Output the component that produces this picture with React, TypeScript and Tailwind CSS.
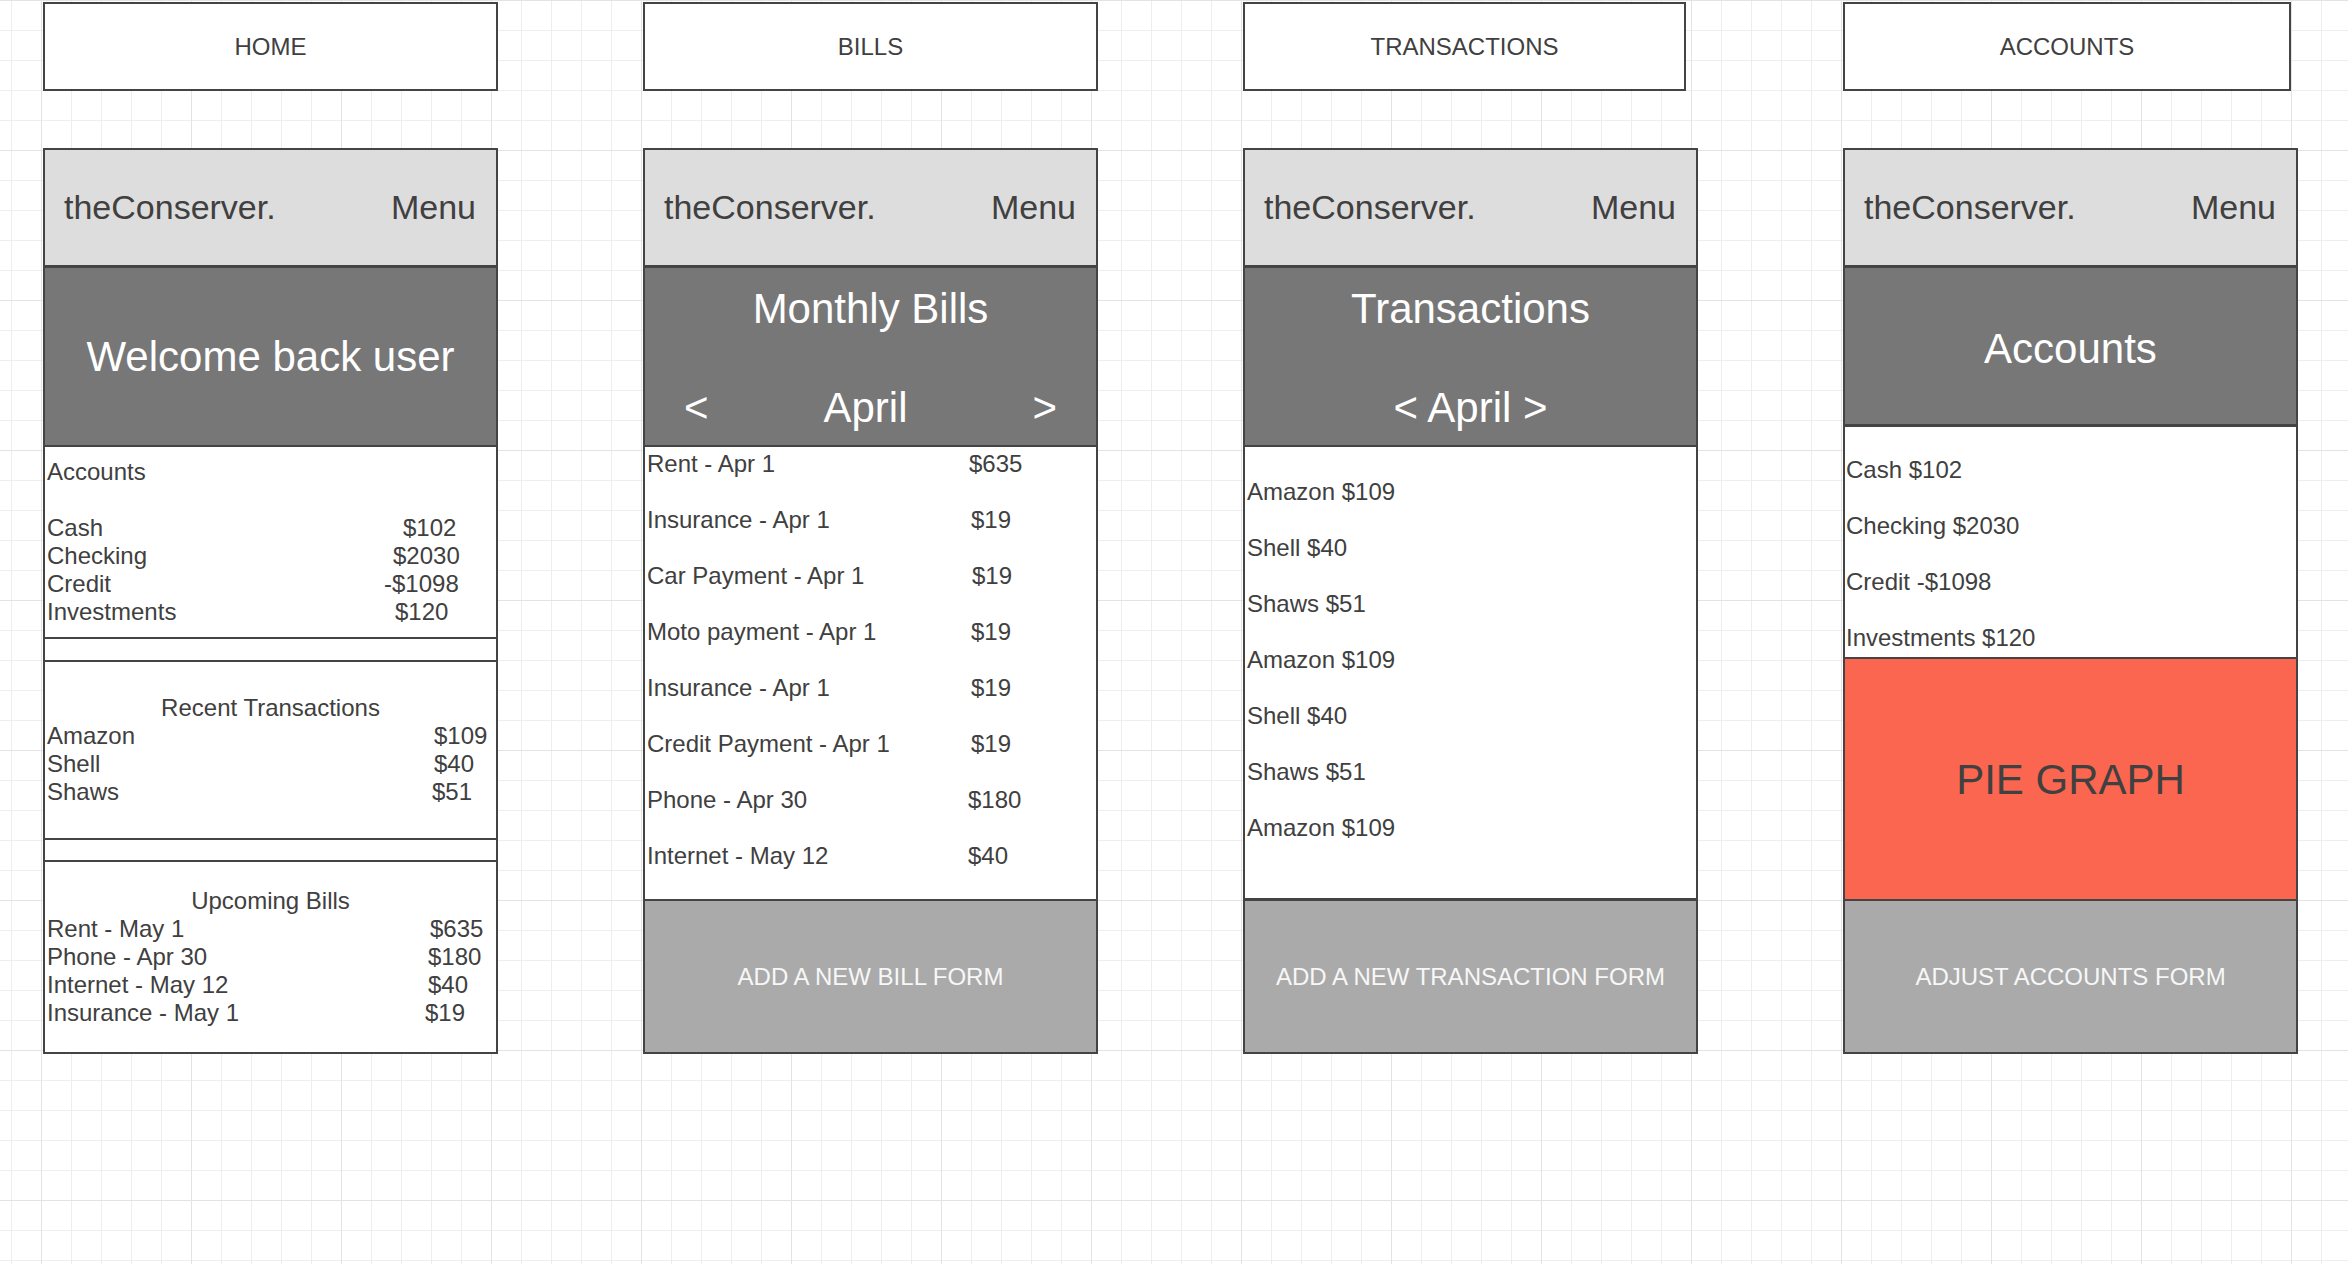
import React from "react";

type Row = { name: string; amount: string; w: string };

const homeAccounts: Row[] = [
  { name: "Cash", amount: "$102", w: "w-[356px]" },
  { name: "Checking", amount: "$2030", w: "w-[346px]" },
  { name: "Credit", amount: "-$1098", w: "w-[337px]" },
  { name: "Investments", amount: "$120", w: "w-[348px]" },
];

const recentTx: Row[] = [
  { name: "Amazon", amount: "$109", w: "w-[387px]" },
  { name: "Shell", amount: "$40", w: "w-[387px]" },
  { name: "Shaws", amount: "$51", w: "w-[385px]" },
];

const upcomingBills: Row[] = [
  { name: "Rent - May 1", amount: "$635", w: "w-[383px]" },
  { name: "Phone - Apr 30", amount: "$180", w: "w-[381px]" },
  { name: "Internet - May 12", amount: "$40", w: "w-[381px]" },
  { name: "Insurance - May 1", amount: "$19", w: "w-[378px]" },
];

const monthlyBills: Row[] = [
  { name: "Rent - Apr 1", amount: "$635", w: "w-[322px]" },
  { name: "Insurance - Apr 1", amount: "$19", w: "w-[324px]" },
  { name: "Car Payment - Apr 1", amount: "$19", w: "w-[325px]" },
  { name: "Moto payment - Apr 1", amount: "$19", w: "w-[324px]" },
  { name: "Insurance - Apr 1", amount: "$19", w: "w-[324px]" },
  { name: "Credit Payment - Apr 1", amount: "$19", w: "w-[324px]" },
  { name: "Phone - Apr 30", amount: "$180", w: "w-[321px]" },
  { name: "Internet - May 12", amount: "$40", w: "w-[321px]" },
];

const transactions = ["Amazon $109", "Shell $40", "Shaws $51", "Amazon $109", "Shell $40", "Shaws $51", "Amazon $109"];

const accountLines = ["Cash $102", "Checking $2030", "Credit -$1098", "Investments $120"];

function Label({ text, w }: { text: string; w: string }) {
  return (
    <div className={`${w} h-[89px] border-2 border-[#444444] bg-white flex items-center justify-center text-[24px] text-[#404040]`}>
      {text}
    </div>
  );
}

function Phone({ children }: { children: React.ReactNode }) {
  return (
    <div className="w-[455px] h-[906px] mt-[57px] border-2 border-[#444444] bg-white flex flex-col overflow-hidden">
      <div className="h-[118px] shrink-0 flex items-center justify-between pl-[19px] pr-[20px] bg-[#dddddd] border-b-[3px] border-[#444444] text-[34px] text-[#404040]">
        <span>theConserver.</span>
        <span>Menu</span>
      </div>
      {children}
    </div>
  );
}

function Rows({ rows }: { rows: Row[] }) {
  return (
    <>
      {rows.map((r, i) => (
        <div key={i} className="flex">
          <span className={r.w}>{r.name}</span>
          <span>{r.amount}</span>
        </div>
      ))}
    </>
  );
}

function FormBar({ text }: { text: string }) {
  return (
    <div className="flex-1 bg-[#aaaaaa] flex items-center justify-center text-[24px] text-[#f7f7f7]">
      {text}
    </div>
  );
}

function MonthTitle({ title, children }: { title: string; children: React.ReactNode }) {
  return (
    <div className="h-[179px] shrink-0 bg-[#777777] border-b-2 border-[#444444] text-white text-[42px] leading-[48px] pt-[17px] flex flex-col">
      <div className="text-center">{title}</div>
      <div className="mt-[51px]">{children}</div>
    </div>
  );
}

export default function App() {
  return (
    <div
      className="w-full min-h-[1264px] h-[1264px] overflow-hidden bg-white font-['Liberation_Sans',Arial,sans-serif] text-[#404040] bg-[linear-gradient(to_right,#e3e3e3_1px,transparent_1px),linear-gradient(to_bottom,#e3e3e3_1px,transparent_1px),linear-gradient(to_right,#eeeeee_1px,transparent_1px),linear-gradient(to_bottom,#eeeeee_1px,transparent_1px)] bg-[size:150px_150px,150px_150px,30px_30px,30px_30px] bg-[position:41px_0,41px_0,11px_0,11px_0]"
    >
      <div className="flex gap-[145px] pl-[43px] pt-[2px]">
        {/* HOME */}
        <div className="flex flex-col">
          <Label text="HOME" w="w-[455px]" />
          <Phone>
            <div className="h-[179px] shrink-0 bg-[#777777] border-b-2 border-[#444444] flex items-center justify-center text-white text-[42px]">
              Welcome back user
            </div>
            <div className="h-[192px] shrink-0 border-b-2 border-[#444444] flex flex-col justify-center pl-[2px] text-[24px] leading-[28px]">
              <div>Accounts</div>
              <div className="h-[28px]" />
              <Rows rows={homeAccounts} />
            </div>
            <div className="h-[23px] shrink-0 border-b-2 border-[#444444]" />
            <div className="h-[178px] shrink-0 border-b-2 border-[#444444] flex flex-col justify-center pl-[2px] text-[24px] leading-[28px]">
              <div className="text-center pr-[2px]">Recent Transactions</div>
              <Rows rows={recentTx} />
            </div>
            <div className="h-[22px] shrink-0 border-b-2 border-[#444444]" />
            <div className="flex-1 flex flex-col justify-center pl-[2px] text-[24px] leading-[28px]">
              <div className="text-center pr-[2px]">Upcoming Bills</div>
              <Rows rows={upcomingBills} />
            </div>
          </Phone>
        </div>

        {/* BILLS */}
        <div className="flex flex-col">
          <Label text="BILLS" w="w-[455px]" />
          <Phone>
            <MonthTitle title="Monthly Bills">
              <div className="flex items-center justify-between px-[39px]">
                <span>&lt;</span>
                <span className="mr-[10px]">April</span>
                <span>&gt;</span>
              </div>
            </MonthTitle>
            <div className="h-[454px] shrink-0 border-b-2 border-[#444444] pt-[3px] pl-[2px] text-[24px] leading-[28px] flex flex-col gap-[28px]">
              <Rows rows={monthlyBills} />
            </div>
            <FormBar text="ADD A NEW BILL FORM" />
          </Phone>
        </div>

        {/* TRANSACTIONS */}
        <div className="flex flex-col">
          <Label text="TRANSACTIONS" w="w-[443px]" />
          <Phone>
            <MonthTitle title="Transactions">
              <div className="text-center">&lt; April &gt;</div>
            </MonthTitle>
            <div className="h-[454px] shrink-0 border-b-[3px] border-[#444444] pt-[31px] pl-[2px] text-[24px] leading-[28px] flex flex-col gap-[28px]">
              {transactions.map((t, i) => (
                <div key={i}>{t}</div>
              ))}
            </div>
            <FormBar text="ADD A NEW TRANSACTION FORM" />
          </Phone>
        </div>

        {/* ACCOUNTS */}
        <div className="flex flex-col">
          <Label text="ACCOUNTS" w="w-[448px]" />
          <Phone>
            <div className="h-[159px] shrink-0 bg-[#777777] border-b-[3px] border-[#444444] pt-[4px] flex items-center justify-center text-white text-[42px]">
              Accounts
            </div>
            <div className="h-[232px] shrink-0 border-b-2 border-[#444444] pt-[29px] pl-[1px] text-[24px] leading-[28px] flex flex-col gap-[28px]">
              {accountLines.map((t, i) => (
                <div key={i}>{t}</div>
              ))}
            </div>
            <div className="h-[242px] shrink-0 bg-[#fa664f] border-b-2 border-[#444444] flex items-center justify-center text-[42px] text-[#404040]">
              PIE GRAPH
            </div>
            <FormBar text="ADJUST ACCOUNTS FORM" />
          </Phone>
        </div>
      </div>
    </div>
  );
}
